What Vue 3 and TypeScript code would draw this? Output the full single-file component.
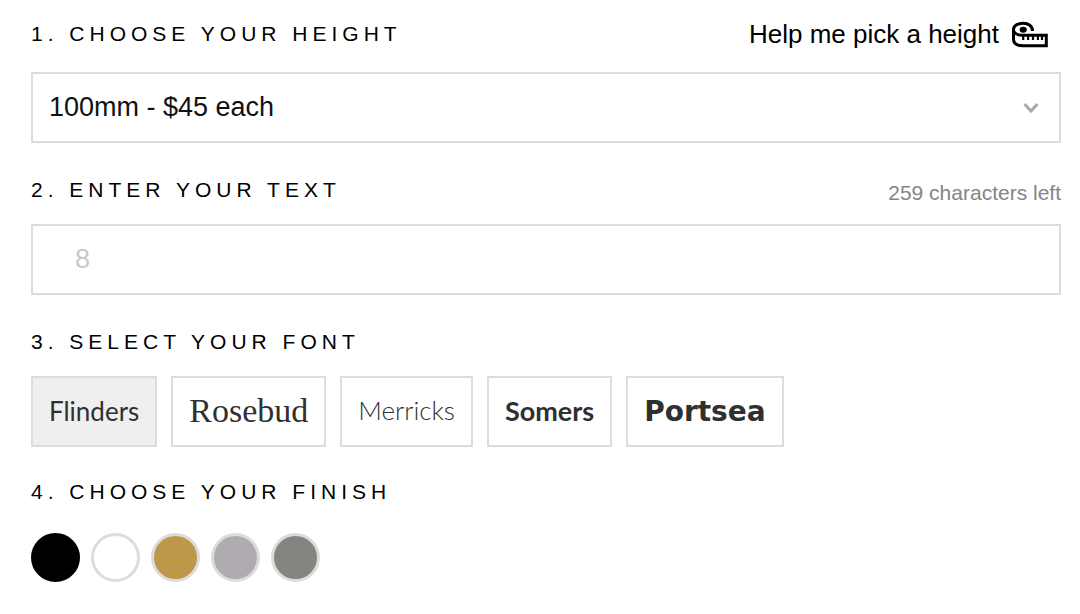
<script setup lang="ts">
import { computed, ref } from 'vue'

interface Option {
  id: string
  label: string
}

const heights: Option[] = [
  { id: '100', label: '100mm - $45 each' },
]
const fonts: Option[] = [
  { id: 'flinders', label: 'Flinders' },
  { id: 'rosebud', label: 'Rosebud' },
  { id: 'merricks', label: 'Merricks' },
  { id: 'somers', label: 'Somers' },
  { id: 'portsea', label: 'Portsea' },
]
const finishes: Option[] = [
  { id: 'black', label: 'Black' },
  { id: 'white', label: 'White' },
  { id: 'brass', label: 'Brass' },
  { id: 'silver', label: 'Silver' },
  { id: 'grey', label: 'Grey' },
]

const limit = 259
const height = ref('100')
const text = ref('')
const font = ref('flinders')
const finish = ref('black')
const remaining = computed(() => limit - text.value.length)
</script>

<template>
  <form class="configurator" @submit.prevent>
    <section class="step step-height">
      <div class="head">
        <label class="title" for="height">1. CHOOSE YOUR HEIGHT</label>
        <a class="help" href="#heights">
          <span>Help me pick a height</span>
          <svg class="tape" viewBox="0 0 36 28" aria-hidden="true">
            <path
              d="M20.5 11C20.5 6 16.5 3.3 11 3.3C5.5 3.3 1.5 6 1.5 9.5C1.5 13.3 5.5 15.3 11 15.3H34.3V25.7H11C5 25.7 1.5 23.4 1.5 19V9.5"
              fill="none" stroke="#000" stroke-width="3"
            />
            <ellipse cx="11.2" cy="9.8" rx="3.6" ry="3" />
            <path d="M11.2 15V20M16.1 15V20M21 15V20M25.9 15V20M30 15V20" stroke="#000" stroke-width="2.2" />
          </svg>
        </a>
      </div>
      <div class="select-wrap">
        <select id="height" v-model="height" class="field">
          <option v-for="h in heights" :key="h.id" :value="h.id">{{ h.label }}</option>
        </select>
        <svg class="chevron" viewBox="0 0 16 12" aria-hidden="true">
          <path d="M1.5 2L8 9L14.5 2" fill="none" stroke="#a5abb0" stroke-width="3" />
        </svg>
      </div>
    </section>

    <section class="step step-text">
      <div class="head">
        <label class="title" for="text">2. ENTER YOUR TEXT</label>
        <span class="count">{{ remaining }} characters left</span>
      </div>
      <input id="text" v-model="text" class="field text" type="text" placeholder="8" :maxlength="limit">
    </section>

    <section class="step step-font">
      <h2 id="font-title" class="title">3. SELECT YOUR FONT</h2>
      <div class="fonts" role="group" aria-labelledby="font-title">
        <button
          v-for="f in fonts" :key="f.id" type="button"
          class="font" :class="[f.id, { selected: font === f.id }]"
          :aria-pressed="font === f.id" @click="font = f.id"
        >{{ f.label }}</button>
      </div>
    </section>

    <section class="step step-finish">
      <h2 id="finish-title" class="title">4. CHOOSE YOUR FINISH</h2>
      <div class="finishes" role="radiogroup" aria-labelledby="finish-title">
        <input
          v-for="f in finishes" :key="f.id" v-model="finish" type="radio" name="finish"
          class="swatch" :class="f.id" :value="f.id" :aria-label="f.label"
        >
      </div>
    </section>
  </form>
</template>

<style>
body {
  margin: 0;
  background: #fff;
}
</style>

<style scoped>
.configurator {
  box-sizing: border-box;
  display: flex;
  flex-direction: column;
  gap: 31px;
  padding: 18px 19px 32px 31px;
  color: #000;
  font-family: "Liberation Sans", Arial, sans-serif;
}
.step {
  display: flex;
  flex-direction: column;
  gap: 18px;
}
.step-height {
  gap: 22px;
}
.step-finish {
  gap: 25px;
  margin-top: -2px;
}
.head {
  display: flex;
  align-items: center;
  justify-content: space-between;
}
.title {
  margin: 0;
  font-size: 21px;
  font-weight: 400;
  line-height: 32px;
  letter-spacing: 5px;
}
.help {
  display: flex;
  align-items: center;
  gap: 13px;
  padding-right: 13px;
  color: #000;
  font-size: 26px;
  line-height: 32px;
  text-decoration: none;
}
.tape {
  width: 36px;
  height: 28px;
}
.count {
  padding-top: 6px;
  color: #858585;
  font-size: 21px;
  line-height: 26px;
}
.select-wrap {
  position: relative;
}
.field {
  box-sizing: border-box;
  display: block;
  width: 100%;
  height: 71px;
  margin: 0;
  padding: 0 16px 2px;
  border: 2px solid #dcdcdc;
  border-radius: 0;
  outline: 0;
  appearance: none;
  background: #fff;
  color: #111;
  font-family: inherit;
  font-size: 27px;
}
.text {
  padding: 0 42px;
}
.text::placeholder {
  color: #c8c8c8;
  opacity: 1;
}
.chevron {
  position: absolute;
  top: 30px;
  right: 22px;
  width: 16px;
  height: 12px;
  pointer-events: none;
}
.fonts {
  display: flex;
  flex-wrap: wrap;
  gap: 14px;
}
.font {
  box-sizing: border-box;
  height: 71px;
  padding: 0 16px 2px;
  border: 2px solid #dcdcdc;
  border-radius: 0;
  background: #fff;
  color: #303030;
  font-size: 26px;
}
.selected {
  background: #efefef;
}
.flinders {
  font-family: Lato, sans-serif;
}
.rosebud {
  font-family: "Liberation Serif", serif;
  font-size: 34px;
}
.merricks {
  padding-bottom: 4px;
  font-family: Lato, sans-serif;
  font-weight: 300;
}
.somers {
  font-family: Lato, sans-serif;
  font-size: 27px;
  font-weight: 700;
}
.portsea {
  padding-bottom: 0;
  font-family: "DejaVu Sans", sans-serif;
  font-size: 28px;
  font-weight: 700;
}
.finishes {
  display: flex;
  gap: 11px;
}
.swatch {
  box-sizing: border-box;
  width: 49px;
  height: 49px;
  margin: 0;
  border: 3px solid #dcdcdc;
  border-radius: 50%;
  appearance: none;
  cursor: pointer;
}
.black {
  background: #000;
}
.white {
  background: #fff;
}
.brass {
  background: #bd984a;
}
.silver {
  background: #b0abb1;
}
.grey {
  background: #848581;
}
.swatch:checked {
  border-color: #000;
}
</style>
